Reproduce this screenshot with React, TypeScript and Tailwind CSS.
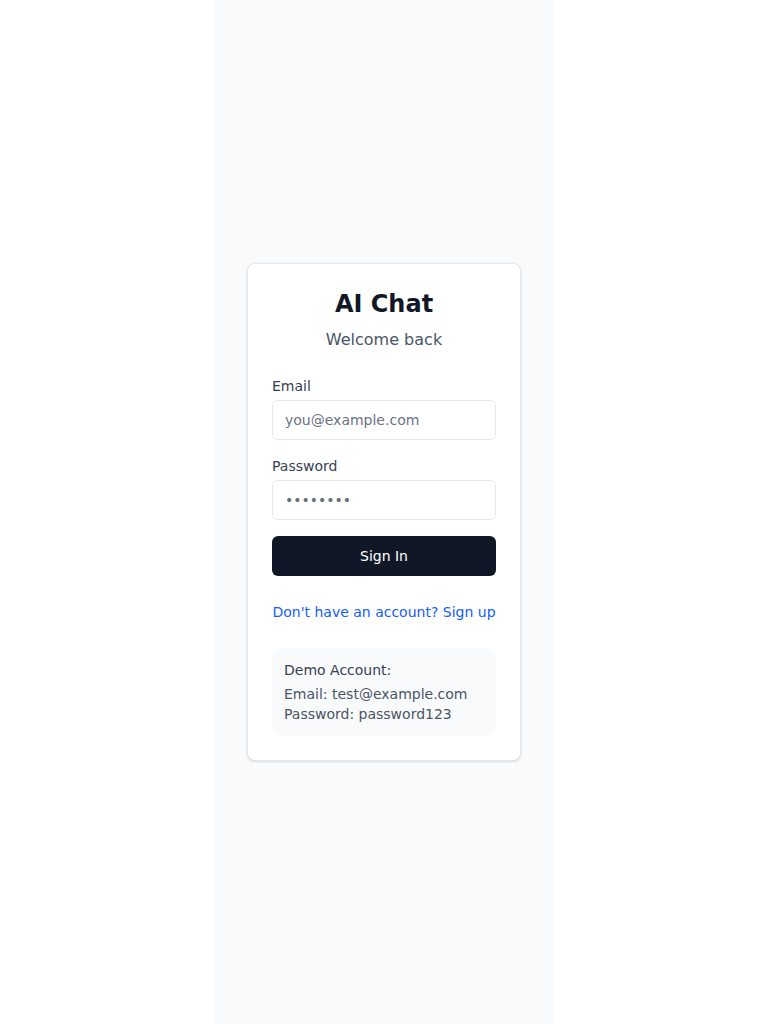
import React, { useState } from 'react'

export default function App() {
  const [email, setEmail] = useState('')
  const [password, setPassword] = useState('')

  return (
    <div className="mx-auto flex min-h-screen w-[338px] items-center justify-center bg-gray-50 font-['DejaVu_Sans',sans-serif]">
      <div className="w-[274px] rounded-lg border border-gray-200 bg-white p-6 shadow-sm">
        <div className="mb-6 text-center">
          <h1 className="text-2xl font-bold text-gray-900">AI Chat</h1>
          <p className="mt-2 text-base text-gray-600">Welcome back</p>
        </div>

        <form className="space-y-4" onSubmit={(e) => e.preventDefault()}>
          <div>
            <label className="mb-1 block text-sm text-gray-700">Email</label>
            <input
              type="email"
              value={email}
              onChange={(e) => setEmail(e.target.value)}
              placeholder="you@example.com"
              className="h-10 w-full rounded-md border border-gray-200 px-3 text-sm text-gray-900 placeholder:text-gray-500 focus:outline-none"
            />
          </div>
          <div>
            <label className="mb-1 block text-sm text-gray-700">Password</label>
            <input
              type="password"
              value={password}
              onChange={(e) => setPassword(e.target.value)}
              placeholder="••••••••"
              className="h-10 w-full rounded-md border border-gray-200 px-3 text-sm text-gray-900 placeholder:text-gray-500 focus:outline-none"
            />
          </div>
          <button
            type="submit"
            className="h-10 w-full rounded-md bg-gray-900 text-sm text-white"
          >
            Sign In
          </button>
        </form>

        <div className="mt-6 whitespace-nowrap text-center">
          <a href="#" className="text-sm text-blue-600">
            Don't have an account? Sign up
          </a>
        </div>

        <div className="mt-6 rounded-lg bg-gray-50 p-3 text-sm">
          <p className="text-gray-700">Demo Account:</p>
          <p className="mt-1 text-gray-600">Email: test@example.com</p>
          <p className="text-gray-600">Password: password123</p>
        </div>
      </div>
    </div>
  )
}
